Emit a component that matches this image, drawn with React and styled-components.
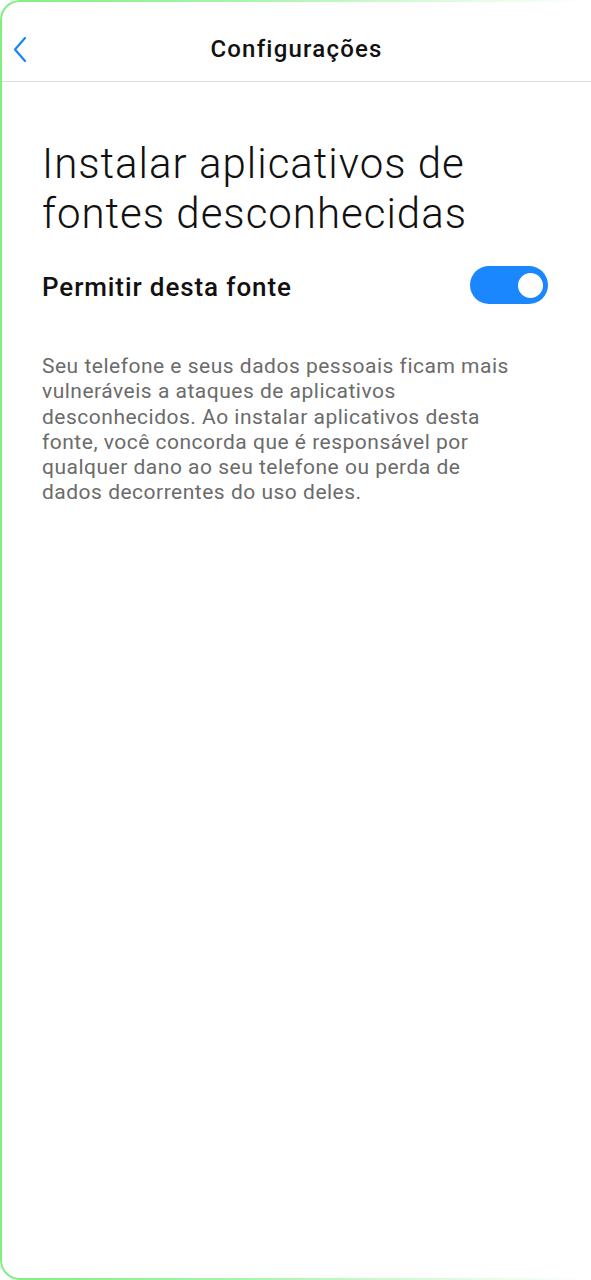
import React from "react";
import styled, { createGlobalStyle } from "styled-components";

const GlobalStyle = createGlobalStyle`
  html, body {
    margin: 0;
    padding: 0;
    background: #ffffff;
  }
  body {
    font-family: Roboto, "Noto Sans", Arial, sans-serif;
  }
`;

const Frame = styled.div`
  box-sizing: border-box;
  width: 591px;
  height: 1280px;
  padding: 2px 0 2px 2px;
  border-radius: 20px;
  background: linear-gradient(
    to right,
    #7fef82 0%,
    #a6f5a8 40%,
    #e4fce4 80%,
    #ffffff 100%
  );
`;

const Screen = styled.div`
  height: 100%;
  background: #ffffff;
  border-radius: 18px 0 0 18px;
  display: flex;
  flex-direction: column;
`;

const Header = styled.header`
  box-sizing: border-box;
  height: 80px;
  padding-top: 14px;
  display: flex;
  align-items: center;
  justify-content: center;
  position: relative;
  border-bottom: 1px solid #dcdcdc;
`;

const BackButton = styled.button`
  position: absolute;
  left: 4px;
  top: 30px;
  width: 28px;
  height: 36px;
  padding: 0;
  border: none;
  background: none;
  display: flex;
  align-items: center;
  justify-content: center;
  cursor: pointer;
`;

const Title = styled.h1`
  margin: 0;
  font-size: 24px;
  font-weight: 500;
  color: #111111;
  letter-spacing: 1.2px;
`;

const Content = styled.main`
  padding: 57px 43px 0 40px;
`;

const Heading = styled.h2`
  margin: 0;
  font-size: 42px;
  font-weight: 300;
  line-height: 50px;
  letter-spacing: 1px;
  color: #111111;
`;

const Row = styled.div`
  display: flex;
  align-items: center;
  justify-content: space-between;
  margin-top: 27px;
`;

const Label = styled.span`
  font-size: 26px;
  font-weight: 500;
  letter-spacing: 0.9px;
  color: #111111;
  padding-top: 3px;
`;

const Toggle = styled.div`
  width: 78px;
  height: 38px;
  border-radius: 19px;
  background: ${(p) => (p.$on ? "#1a87ff" : "#cccccc")};
  display: flex;
  align-items: center;
  justify-content: ${(p) => (p.$on ? "flex-end" : "flex-start")};
  padding: 0 5px 0 7px;
  box-sizing: border-box;
`;

const Knob = styled.span`
  width: 25px;
  height: 25px;
  border-radius: 50%;
  background: #ffffff;
`;

const Description = styled.p`
  margin: 50px 0 0;
  width: 478px;
  font-size: 21px;
  line-height: 25.3px;
  letter-spacing: 0.5px;
  color: #6b6b6b;
`;

export default function App() {
  return (
    <>
      <GlobalStyle />
      <Frame>
        <Screen>
          <Header>
            <BackButton aria-label="Voltar">
              <svg width="20" height="28" viewBox="0 0 20 28">
                <path
                  d="M15 2 L5 13.5 L15 25"
                  fill="none"
                  stroke="#1a85f0"
                  strokeWidth="2.2"
                  strokeLinecap="round"
                  strokeLinejoin="round"
                />
              </svg>
            </BackButton>
            <Title>Configurações</Title>
          </Header>
          <Content>
            <Heading>
              Instalar aplicativos de
              <br />
              fontes desconhecidas
            </Heading>
            <Row>
              <Label>Permitir desta fonte</Label>
              <Toggle $on>
                <Knob />
              </Toggle>
            </Row>
            <Description>
              Seu telefone e seus dados pessoais ficam mais vulneráveis a
              ataques de aplicativos desconhecidos. Ao instalar aplicativos
              desta fonte, você concorda que é responsável por qualquer dano ao
              seu telefone ou perda de dados decorrentes do uso deles.
            </Description>
          </Content>
        </Screen>
      </Frame>
    </>
  );
}
